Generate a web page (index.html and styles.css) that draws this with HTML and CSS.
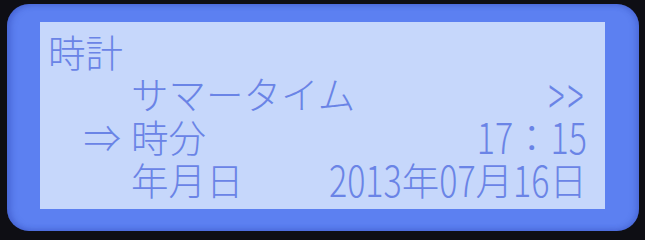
FILE: index.html
```html
<!DOCTYPE html>
<html lang="ja">
<head>
<meta charset="utf-8">
<title>時計</title>
<link rel="stylesheet" href="styles.css">
</head>
<body>
<div class="bezel">
  <div class="screen">
    <div class="row title">時計</div>
    <div class="row">
      <span class="mark"></span>
      <span class="label">サマータイム</span>
      <span class="value"><span class="chev">&gt;&gt;</span></span>
    </div>
    <div class="row">
      <span class="mark">⇒</span>
      <span class="label">時分</span>
      <span class="value"><span class="num">17</span>：<span class="num">15</span></span>
    </div>
    <div class="row">
      <span class="mark"></span>
      <span class="label">年月日</span>
      <span class="value"><span class="num">2013</span>年<span class="num">07</span>月<span class="num">16</span>日</span>
    </div>
  </div>
</div>
</body>
</html>
```
FILE: styles.css
```css
html, body {
  margin: 0;
  padding: 0;
  background: #0e0e14;
}
body {
  width: 645px;
  height: 237px;
  overflow: hidden;
}
.bezel {
  margin: 4px 6px 0 7px;
  width: 632px;
  height: 227px;
  box-sizing: border-box;
  padding: 18px 34px 22px 33px;
  border-radius: 22px;
  background: #5c80f1;
  box-shadow: inset 4px 0 6px rgba(40, 60, 170, 0.35), inset -3px 0 6px rgba(40, 60, 170, 0.3);
}
.screen {
  width: 565px;
  height: 187px;
  box-sizing: border-box;
  padding: 8px 18px 0 8px;
  background: #c6d7fb;
  color: #6a84e6;
  font-family: "Noto Sans CJK JP", sans-serif;
  font-weight: 300;
  font-size: 37.5px;
}
.row {
  display: flex;
  align-items: center;
  height: 43px;
  line-height: 43px;
  white-space: nowrap;
}
.title {
  height: 41px;
}
.mark {
  width: 73px;
  padding-right: 10px;
  flex: none;
  text-align: right;
}
.label {
  flex: none;
}
.value {
  margin-left: auto;
  display: flex;
  align-items: center;
}
.num {
  display: inline-block;
  font-size: 34px;
  line-height: 30px;
  transform: scaleY(1.25);
}
.chev {
  display: inline-block;
  font-size: 54px;
  line-height: 30px;
  letter-spacing: 6px;
  transform: scaleX(0.55);
  transform-origin: right center;
}
```
